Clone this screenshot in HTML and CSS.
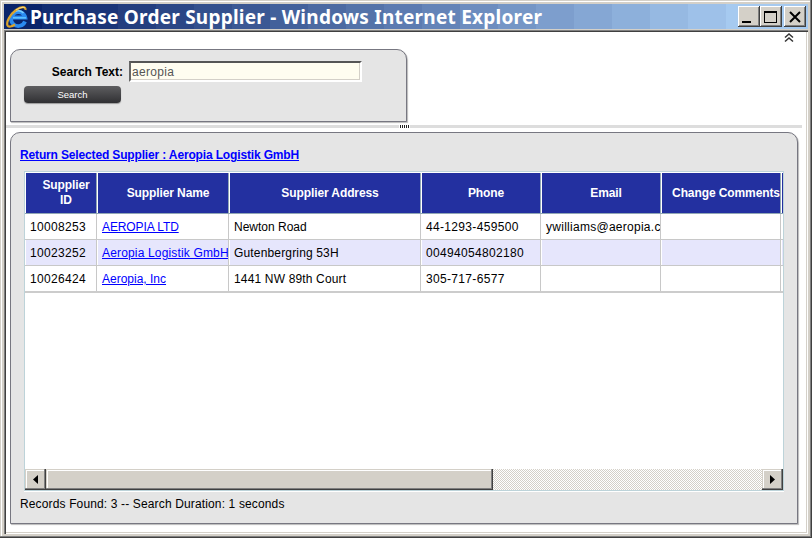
FILE: index.html
```html
<!DOCTYPE html>
<html lang="en">
<head>
<meta charset="utf-8">
<title>Purchase Order Supplier - Windows Internet Explorer</title>
<link rel="stylesheet" href="styles.css">
</head>
<body>
<div class="window">
  <header class="titlebar">
    <svg class="ie" width="24" height="24" viewBox="0 0 24 24">
      <path d="M20 16.500A7.200 7 0 1 1 20.300 12.500H8" fill="none" stroke="#2a8af0" stroke-width="3.800"/>
      <path d="M18.500 8A7 7 0 0 0 7.500 8.500" fill="none" stroke="#74ccff" stroke-width="1.800"/>
      <path d="M8 12.800h13" fill="none" stroke="#5cc0ff" stroke-width="1.600"/>
      <path d="M20.500 5C21 1 16 1.500 11 5C5 9.500 1 17 2.500 20.500C3.500 22.500 7 21.500 10 19.500" fill="none" stroke="#d9a32c" stroke-width="2.200"/>
      <path d="M20 3C18 1.500 14 3 11 5" fill="none" stroke="#ffe08a" stroke-width="1"/>
    </svg>
    <h1 class="title">Purchase Order Supplier - Windows Internet Explorer</h1>
    <div class="controls">
      <button class="ctl"><svg width="22" height="21"><path d="M4 15h9v2H4z"/></svg></button>
      <button class="ctl"><svg width="22" height="21"><path fill-rule="evenodd" d="M4 5h13v12H4zM5 7v9h11V7z"/></svg></button>
      <button class="ctl close"><svg width="22" height="21"><path d="M6 6L16 16M16 6L6 16" fill="none" stroke="#000" stroke-width="2"/></svg></button>
    </div>
  </header>
  <main class="client">
    <div class="toprow">
      <svg width="10" height="10" viewBox="0 0 10 10"><path d="M1 4.500L5 1L9 4.500M1 8.500L5 5L9 8.500" fill="none" stroke="#333" stroke-width="1.500"/></svg>
    </div>
    <section class="panel search">
      <div class="field">
        <label for="q">Search Text:</label>
        <input id="q" value="aeropia">
      </div>
      <button class="go">Search</button>
    </section>
    <div class="splitter"><div class="grip"></div></div>
    <section class="panel results">
      <a class="return" href="#">Return Selected Supplier : Aeropia Logistik GmbH</a>
      <div class="grid">
        <div class="view">
          <div class="row head">
            <div class="cell">Supplier<br>ID</div><div class="cell">Supplier Name</div><div class="cell">Supplier Address</div><div class="cell">Phone</div><div class="cell">Email</div><div class="cell">Change Comments</div><div class="cell"></div>
          </div>
          <div class="row">
            <div class="cell num">10008253</div><div class="cell"><a class="caps" href="#">AEROPIA LTD</a></div><div class="cell"><span class="plain">Newton Road</span></div><div class="cell num">44-1293-459500</div><div class="cell mail">ywilliams@aeropia.c</div><div class="cell"></div><div class="cell"></div>
          </div>
          <div class="row alt">
            <div class="cell num">10023252</div><div class="cell"><a href="#">Aeropia Logistik GmbH</a></div><div class="cell">Gutenbergring 53H</div><div class="cell num">00494054802180</div><div class="cell"></div><div class="cell"></div><div class="cell"></div>
          </div>
          <div class="row">
            <div class="cell num">10026424</div><div class="cell"><a class="plain" href="#">Aeropia, Inc</a></div><div class="cell">1441 NW 89th Court</div><div class="cell num">305-717-6577</div><div class="cell"></div><div class="cell"></div><div class="cell"></div>
          </div>
        </div>
        <div class="scrollbar">
          <div class="sb"><svg width="5" height="9"><path d="M5 0v9L0 4.500z"/></svg></div>
          <div class="sb thumb"></div>
          <div class="sb right"><svg width="5" height="9"><path d="M0 0v9L5 4.500z"/></svg></div>
        </div>
      </div>
      <p class="status">Records Found: 3 -- Search Duration: 1 seconds</p>
    </section>
  </main>
</div>
</body>
</html>
```
FILE: styles.css
```css
* { box-sizing: border-box; }
body {
  margin: 0;
  width: 812px;
  height: 538px;
  overflow: hidden;
  font: 12px/14px "Liberation Sans", Arial, sans-serif;
  color: #000;
}
button { padding: 0; border: 0; }
.window {
  width: 812px;
  height: 538px;
  padding: 4px;
  background: #d4d0c8;
  box-shadow: inset -1px -1px #404040, inset -2px -2px #808080, inset 1px 1px #d4d0c8, inset 2px 2px #fff;
}
.titlebar {
  display: flex;
  align-items: center;
  height: 25px;
  padding: 0 2px 0 1px;
  background: linear-gradient(90deg,
    rgb(10,36,106) 38px, rgb(18,45,113) 38px 76px, rgb(26,53,120) 76px 114px,
    rgb(35,62,127) 114px 152px, rgb(43,71,134) 152px 190px, rgb(51,80,141) 190px 228px,
    rgb(59,88,148) 228px 266px, rgb(67,97,155) 266px 304px, rgb(76,106,162) 304px 342px,
    rgb(84,115,169) 342px 380px, rgb(92,123,177) 380px 418px, rgb(100,132,184) 418px 456px,
    rgb(109,141,191) 456px 494px, rgb(117,150,198) 494px 532px, rgb(125,158,205) 532px 570px,
    rgb(133,167,212) 570px 608px, rgb(141,176,219) 608px 646px, rgb(150,185,226) 646px 684px,
    rgb(158,193,233) 684px 722px, rgb(166,202,240) 722px);
}
.ie { flex: none; }
.title {
  flex: 1;
  margin: 0 0 0 1px;
  padding-top: 1px;
  font: bold 19px/25px "Noto Sans", sans-serif;
  letter-spacing: .24px;
  color: #fff;
  white-space: nowrap;
}
.controls { display: flex; }
.ctl {
  width: 22px;
  height: 21px;
  background: #d4d0c8;
  box-shadow: inset -1px -1px #404040, inset 1px 1px #fff, inset -2px -2px #808080;
}
.ctl svg { display: block; }
.close { margin-left: 2px; }
.client {
  display: flex;
  flex-direction: column;
  height: 505px;
  padding: 3px 2px 2px 2px;
  background: #fff;
  box-shadow: inset 0 1px #d4d0c8, inset 1px 0 #808080, inset 0 2px #808080, inset 2px 3px #404040, inset -1px -1px #fff, inset -2px -2px #d4d0c8;
}
.toprow { display: flex; justify-content: flex-end; height: 17px; padding: 1px 12px 0 0; flex: none; }
.panel {
  border: 1px solid #777781;
  border-radius: 10px 10px 0 0;
  background: #e5e5e5;
  box-shadow: 1px 1px 1px #bbb;
}
.search { width: 397px; height: 73px; margin-left: 4px; padding: 11px 13px; flex: none; }
.field { display: flex; align-items: center; height: 21px; }
.field label { width: 105px; padding-right: 6px; text-align: right; font-weight: bold; white-space: nowrap; }
#q {
  width: 233px;
  height: 21px;
  padding: 0 1px;
  border: 2px solid;
  border-color: #555 #fff #fff #666;
  box-shadow: inset -1px -1px #d4d0c8;
  background: #fffdf0;
  color: #555;
  font: 12px "Liberation Sans", Arial, sans-serif;
  letter-spacing: .3px;
}
.go {
  display: block;
  width: 97px;
  height: 17px;
  margin-top: 4px;
  border-radius: 4px;
  background: linear-gradient(#5e5e60, #303033);
  box-shadow: 0 1px 1px #999;
  color: #fff;
  font: 9.500px/16px "Liberation Sans", Arial, sans-serif;
}
.splitter { width: 796px; height: 3px; margin: 3px 0 4px; padding-left: 393px; background: #ddd; flex: none; }
.grip { width: 11px; height: 3px; background: repeating-linear-gradient(90deg, #fff 0 1px, #222 1px 2px); }
.results { width: 788px; height: 392px; margin-left: 4px; padding: 15px 9px 0; flex: none; }
a { color: #00f; text-decoration: underline; }
.return { display: block; width: max-content; height: 14px; font-weight: bold; letter-spacing: -.15px; white-space: nowrap; }
.grid { width: 760px; height: 320px; margin: 9px 0 0 4px; border: 1px solid #bdd3d9; background: #fff; box-shadow: 0 1px #fff; }
.view { height: 297px; padding-top: 1px; overflow: hidden; }
.row {
  display: grid;
  grid-template-columns: 72px 132px 192px 120px 120px 120px 72px;
  height: 26px;
  border-bottom: 1px solid #c8c8c8;
  line-height: 27px;
  letter-spacing: .16px;
}
.cell {
  height: 25px;
  overflow: hidden;
  padding-left: 4px;
  border-left: 1px solid #fff;
  border-right: 1px solid #c8c8c8;
  white-space: nowrap;
}
.num { letter-spacing: .33px; }
.mail { letter-spacing: .27px; }
.plain { letter-spacing: 0; }
.caps { letter-spacing: -.1px; }
.alt .cell { background: #e6e6fc; background-clip: padding-box; }
.row:last-child { border-bottom: 2px solid #ccc; height: 27px; }
.head { height: 41px; border-bottom-color: #91a7b5; background: #fff; }
.head .cell {
  display: flex;
  align-items: center;
  justify-content: center;
  height: 40px;
  padding-left: 10px;
  border-right-color: #91a7b5;
  background: #2330a0;
  background-clip: padding-box;
  color: #fff;
  font-weight: bold;
  letter-spacing: -.1px;
  line-height: 15px;
  text-align: center;
}
.scrollbar {
  display: flex;
  height: 21px;
  background: repeating-conic-gradient(#fff 0 25%, #d4d0c8 0 50%) 0 0 / 2px 2px;
}
.sb {
  display: flex;
  align-items: center;
  justify-content: center;
  width: 21px;
  height: 21px;
  background: #d4d0c8;
  box-shadow: inset -1px -1px #404040, inset -2px -2px #808080, inset 1px 1px #d4d0c8, inset 2px 2px #fff;
}
.thumb { width: 447px; }
.right { margin-left: auto; }
.status { margin: 6px 0 0; letter-spacing: .14px; white-space: nowrap; }
```
